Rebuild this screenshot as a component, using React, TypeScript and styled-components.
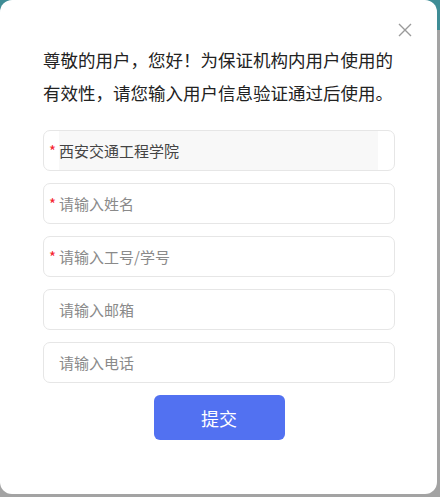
import React from 'react';
import styled, { createGlobalStyle } from 'styled-components';

const GlobalStyle = createGlobalStyle`
    html, body {
        margin: 0;
        padding: 0;
        height: 100%;
    }
    body {
        background: linear-gradient(to bottom, #3f8d96 0, #3f8d96 30px, #a3a3a3 30px, #a3a3a3 100%);
        font-family: "Noto Sans CJK SC", "Noto Sans", sans-serif;
    }
`;

const Dialog = styled.section`
    position: relative;
    box-sizing: border-box;
    width: 437px;
    height: 494px;
    background: #fff;
    border-radius: 12px;
    padding: 43px 42px 0 43px;
`;

const Close = styled.button`
    position: absolute;
    top: 23px;
    right: 25px;
    width: 14px;
    height: 14px;
    padding: 0;
    border: none;
    background: none;
    cursor: pointer;
    display: flex;
`;

const Notice = styled.p`
    margin: 0;
    font-size: 17.5px;
    line-height: 33px;
    color: #222;
`;

const Form = styled.form`
    margin-top: 21px;
    display: flex;
    flex-direction: column;
    gap: 12px;
`;

const Field = styled.label`
    box-sizing: border-box;
    height: 41px;
    border: 1px solid #e6e6e6;
    border-radius: 7px;
    display: flex;
    align-items: center;
    padding-left: 5px;
    padding-right: 16px;
`;

const Star = styled.span<{ $show: boolean }>`
    width: 10px;
    color: #f5222d;
    font-size: 15px;
    visibility: ${p => (p.$show ? 'visible' : 'hidden')};
`;

const Input = styled.input`
    flex: 1;
    min-width: 0;
    height: 100%;
    box-sizing: border-box;
    border: none;
    outline: none;
    padding: 0;
    font-family: inherit;
    font-size: 15px;
    color: #444;
    background: transparent;

    &::placeholder {
        color: #8a8a8a;
    }

    &:disabled {
        background: #f8f8f8;
        color: #444;
    }
`;

const Submit = styled.button`
    align-self: center;
    width: 131px;
    height: 45px;
    border: none;
    border-radius: 6px;
    background: #5271f1;
    color: #fff;
    font-family: inherit;
    font-size: 18px;
    cursor: pointer;
`;

const fields = [
    { required: true, value: '西安交通工程学院', disabled: true },
    { required: true, placeholder: '请输入姓名' },
    { required: true, placeholder: '请输入工号/学号' },
    { required: false, placeholder: '请输入邮箱' },
    { required: false, placeholder: '请输入电话' },
];

export default function App()
{
    return (
        <>
            <GlobalStyle />
            <Dialog>
                <Close aria-label="关闭">
                    <svg width="14" height="14" viewBox="0 0 14 14">
                        <path d="M1 1 L13 13 M13 1 L1 13" stroke="#9a9a9a" strokeWidth="1.4" />
                    </svg>
                </Close>
                <Notice>
                    尊敬的用户，您好！为保证机构内用户使用的有效性，请您输入用户信息验证通过后使用。
                </Notice>
                <Form onSubmit={e => e.preventDefault()}>
                    {fields.map((f, i) => (
                        <Field key={i}>
                            <Star $show={f.required}>*</Star>
                            <Input
                                defaultValue={f.value}
                                placeholder={f.placeholder}
                                disabled={f.disabled}
                            />
                        </Field>
                    ))}
                    <Submit type="submit">提交</Submit>
                </Form>
            </Dialog>
        </>
    );
}
